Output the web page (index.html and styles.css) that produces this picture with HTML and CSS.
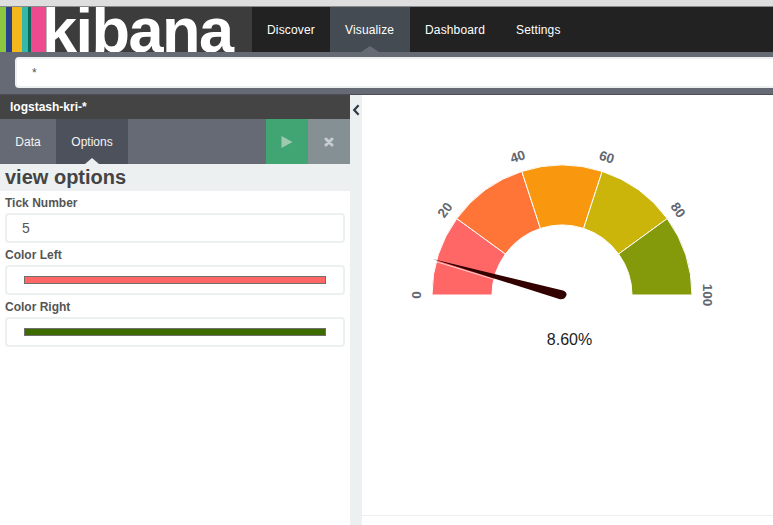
FILE: index.html
```html
<!DOCTYPE html>
<html lang="en">
<head>
<meta charset="UTF-8">
<meta name="viewport" content="width=device-width, initial-scale=1.0">
<title>Kibana - Visualize</title>
<link rel="stylesheet" href="styles.css">
</head>
<body>

<div class="topstrip"></div>

<nav class="navbar">
  <div class="logo">
    <div class="stripes">
      <span class="s1"></span><span class="s2"></span><span class="s3"></span><span class="s4"></span><span class="s5"></span><span class="s6"></span>
    </div>
    <span class="logo-text">kibana</span>
  </div>
  <a class="nav-item nav-discover">Discover</a>
  <a class="nav-item nav-visualize active">Visualize</a>
  <a class="nav-item nav-dashboard">Dashboard</a>
  <a class="nav-item nav-settings">Settings</a>
</nav>

<div class="querybar">
  <div class="query">*</div>
</div>

<div class="content">
  <aside class="sidebar">
    <div class="index-title">logstash-kri-*</div>

    <div class="tabs">
      <a class="tab tab-data">Data</a>
      <a class="tab tab-options active">Options</a>
      <div class="tab-space"></div>
      <a class="btn-apply">
        <svg width="12" height="12" viewBox="0 0 12 12"><path d="M0.5 0 L11.5 6 L0.5 12 Z" fill="#9fc9ae"/></svg>
      </a>
      <a class="btn-discard">
        <svg width="10" height="10" viewBox="0 0 10 10"><path d="M2 2 L8 8 M8 2 L2 8" stroke="#c8cdd0" stroke-width="3" stroke-linecap="round"/></svg>
      </a>
    </div>

    <h2 class="section-title">view options</h2>

    <div class="form">
      <label>Tick Number</label>
      <div class="field field-number">5</div>
      <label>Color Left</label>
      <div class="field"><div class="swatch swatch-left"></div></div>
      <label>Color Right</label>
      <div class="field"><div class="swatch swatch-right"></div></div>
    </div>
  </aside>

  <div class="collapser">
    <svg width="8" height="12" viewBox="0 0 8 12"><path d="M6.6 1.2 L2.2 6 L6.6 10.8" fill="none" stroke="#2f3b46" stroke-width="2.2"/></svg>
  </div>

  <main class="chart">
    <svg class="gauge" width="411" height="420" viewBox="362 95 411 420">
      <g stroke="#fff" stroke-width="1">
        <path fill="#ff6666" d="M432 295 A130 130 0 0 1 456.8 218.6 L505.4 254 A70 70 0 0 0 492 295 Z"/>
        <path fill="#ff7538" d="M456.8 218.6 A130 130 0 0 1 521.8 171.4 L540.4 228.4 A70 70 0 0 0 505.4 254 Z"/>
        <path fill="#f9980f" d="M521.8 171.4 A130 130 0 0 1 602.2 171.4 L583.6 228.4 A70 70 0 0 0 540.4 228.4 Z"/>
        <path fill="#cbb50b" d="M602.2 171.4 A130 130 0 0 1 667.2 218.6 L618.6 254 A70 70 0 0 0 583.6 228.4 Z"/>
        <path fill="#849a0a" d="M667.2 218.6 A130 130 0 0 1 692 295 L632 295 A70 70 0 0 0 618.6 254 Z"/>
      </g>
      <path class="needle-edge" d="M434 261 L493 279"/>
      <path class="needle" d="M432.5 259 L563 290.5 Q567.5 292.5 566.3 295.5 Q564.5 299.8 560 299.3 Z"/>
      <g class="ticks">
        <text transform="translate(416.7 295) rotate(-90)">0</text>
        <text transform="translate(445 210) rotate(-54)">20</text>
        <text transform="translate(517.7 156.7) rotate(-18)">40</text>
        <text transform="translate(606.7 157.3) rotate(18)">60</text>
        <text transform="translate(678 210) rotate(54)">80</text>
        <text transform="translate(707 295) rotate(90)">100</text>
      </g>
      <text class="value" x="569.5" y="345">8.60%</text>
    </svg>
  </main>
</div>

</body>
</html>
```
FILE: styles.css
```css
html, body {
  height: 100%;
}
body {
  margin: 0;
  font-family: "Liberation Sans", Arial, sans-serif;
  font-size: 12px;
  color: #444;
  background-color: #fff;
  overflow: hidden;
  display: flex;
  flex-direction: column;
}
.topstrip {
  height: 6px;
  background-color: #dedede;
  border-bottom: 1px solid #8a8a8a;
  flex: none;
}

/* navbar */
.navbar {
  display: flex;
  height: 45px;
  flex: none;
  background-color: #222;
}
.logo {
  display: flex;
  width: 252px;
  background-color: #3c3c3c;
  overflow: hidden;
}
.stripes {
  display: flex;
  flex: none;
}
.stripes span {
  display: block;
  height: 100%;
}
.s1 { width: 6px; background-color: #8cc63f; }
.s2 { width: 6px; background-color: #27408b; }
.s3 { width: 10px; background-color: #f5b81c; }
.s4 { width: 6px; background-color: #35b8a8; }
.s5 { width: 3px; background-color: #0a6b5c; }
.s6 { width: 15px; background-color: #ee4a8f; }
.logo-text {
  color: #fff;
  font-weight: bold;
  font-size: 63px;
  line-height: 63px;
  letter-spacing: -1.5px;
  margin-top: -8px;
  margin-left: -4px;
}
.nav-item {
  display: flex;
  align-items: center;
  color: #fff;
  font-size: 12px;
  letter-spacing: 0.15px;
  padding: 0 15px;
  position: relative;
}
.nav-discover { width: 48px; }
.nav-visualize { width: 50px; }
.nav-dashboard { width: 61px; }
.nav-item.active {
  background-color: #444b52;
}
.nav-item.active::after {
  content: "";
  position: absolute;
  left: 50%;
  bottom: 0;
  margin-left: -9px;
  border-left: 9px solid transparent;
  border-right: 9px solid transparent;
  border-bottom: 6px solid #666a75;
}

/* query */
.querybar {
  flex: none;
  height: 42px;
  background-color: #666a75;
  border-bottom: 1px solid #4b4e57;
  box-sizing: content-box;
  padding-left: 15px;
  display: flex;
  align-items: flex-start;
}
.query {
  flex: 1;
  margin-top: 5px;
  margin-right: -10px;
  height: 31px;
  box-sizing: border-box;
  background-color: #fff;
  border: 2px solid #ecf0f1;
  border-radius: 4px;
  padding: 7px 0 0 15px;
  font-size: 12px;
  line-height: 14px;
  color: #555;
}

/* sidebar */
.content {
  flex: 1;
  display: flex;
  min-height: 0;
}
.sidebar {
  width: 350px;
  flex: none;
}
.index-title {
  height: 24px;
  line-height: 24px;
  background-color: #444;
  color: #fff;
  font-weight: bold;
  font-size: 12px;
  padding-left: 10px;
}
.tabs {
  display: flex;
  height: 45px;
  background-color: #666a75;
}
.tab {
  display: flex;
  align-items: center;
  justify-content: center;
  color: #f4f4f4;
  font-size: 12px;
  position: relative;
}
.tab-data { width: 56px; }
.tab-options { width: 72px; }
.tab.active {
  background-color: #4d515c;
}
.tab.active::after {
  content: "";
  position: absolute;
  left: 50%;
  bottom: 0;
  margin-left: -7px;
  border-left: 7px solid transparent;
  border-right: 7px solid transparent;
  border-bottom: 6px solid #ecf0f1;
}
.tab-space {
  flex: 1;
}
.btn-apply, .btn-discard {
  width: 42px;
  display: flex;
  align-items: center;
  justify-content: center;
}
.btn-apply { background-color: #40a573; }
.btn-discard { background-color: #859095; }
.section-title {
  margin: 0;
  height: 27px;
  line-height: 26px;
  background-color: #ecf0f1;
  padding-left: 5px;
  font-size: 20px;
  font-weight: bold;
  color: #444;
}
.form {
  padding: 0 5px;
}
.form label {
  display: block;
  font-size: 12px;
  font-weight: bold;
  height: 22px;
  line-height: 25px;
  color: #555;
}
.field {
  height: 30px;
  box-sizing: border-box;
  border: 2px solid #ecf0f1;
  border-radius: 4px;
  padding: 0 17px;
  display: flex;
  align-items: center;
  font-size: 12px;
  color: #555;
}
.field-number {
  font-size: 14px;
  padding: 0 15px;
}
.swatch {
  flex: 1;
  height: 8px;
  box-sizing: border-box;
  border: 1px solid #707070;
}
.swatch-left { background-color: #ff6666; }
.swatch-right { background-color: #3d6b00; }

/* collapse strip */
.collapser {
  width: 12px;
  flex: none;
  background-color: #ecf0f1;
  display: flex;
  justify-content: center;
  align-items: flex-start;
  padding-top: 9px;
  box-sizing: border-box;
}

/* chart */
.chart {
  flex: 1;
  min-width: 0;
}
.gauge {
  display: block;
  border-bottom: 1px solid #ecf0f1;
}
.needle {
  fill: #300;
}
.needle-edge {
  stroke: #fff;
  stroke-width: 1;
  opacity: 0.7;
}
.ticks text {
  font-family: "Liberation Sans", Arial, sans-serif;
  font-size: 13.5px;
  font-weight: bold;
  fill: #62666f;
  text-anchor: middle;
  dominant-baseline: central;
}
.value {
  font-family: "Liberation Sans", Arial, sans-serif;
  font-size: 16px;
  fill: #222;
  text-anchor: middle;
}
```
